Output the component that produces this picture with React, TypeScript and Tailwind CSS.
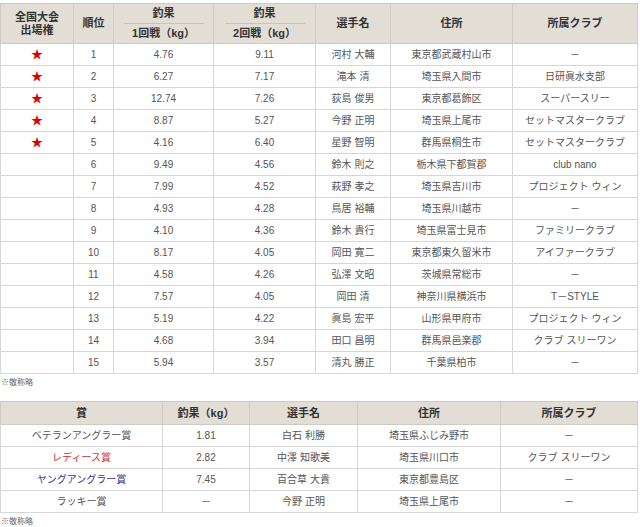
const font = "font-['Liberation_Sans','Noto_Sans_CJK_JP',sans-serif]";

type Row = [boolean, string, string, string, string, string, string];

const results: Row[] = [
  [true, "1", "4.76", "9.11", "河村 大輔", "東京都武蔵村山市", "－"],
  [true, "2", "6.27", "7.17", "滝本 清", "埼玉県入間市", "日研眞水支部"],
  [true, "3", "12.74", "7.26", "荻島 俊男", "東京都葛飾区", "スーパースリー"],
  [true, "4", "8.87", "5.27", "今野 正明", "埼玉県上尾市", "セットマスタークラブ"],
  [true, "5", "4.16", "6.40", "星野 智明", "群馬県桐生市", "セットマスタークラブ"],
  [false, "6", "9.49", "4.56", "鈴木 則之", "栃木県下都賀郡", "club nano"],
  [false, "7", "7.99", "4.52", "萩野 孝之", "埼玉県吉川市", "プロジェクト ウィン"],
  [false, "8", "4.93", "4.28", "鳥居 裕輔", "埼玉県川越市", "－"],
  [false, "9", "4.10", "4.36", "鈴木 貴行", "埼玉県富士見市", "ファミリークラブ"],
  [false, "10", "8.17", "4.05", "岡田 寛二", "東京都東久留米市", "アイファークラブ"],
  [false, "11", "4.58", "4.26", "弘澤 文昭", "茨城県常総市", "－"],
  [false, "12", "7.57", "4.05", "岡田 清", "神奈川県横浜市", "T－STYLE"],
  [false, "13", "5.19", "4.22", "眞島 宏平", "山形県甲府市", "プロジェクト ウィン"],
  [false, "14", "4.68", "3.94", "田口 昌明", "群馬県邑楽郡", "クラブ スリーワン"],
  [false, "15", "5.94", "3.57", "清丸 勝正", "千葉県柏市", "－"],
];

const awards = [
  { name: "ベテランアングラー賞", color: "text-[#3f7a3a]", kg: "1.81", player: "白石 利勝", addr: "埼玉県ふじみ野市", club: "－" },
  { name: "レディース賞", color: "text-[#d0303c]", kg: "2.82", player: "中澤 知歌美", addr: "埼玉県川口市", club: "クラブ スリーワン" },
  { name: "ヤングアングラー賞", color: "text-[#34348a]", kg: "7.45", player: "百合草 大貴", addr: "東京都豊島区", club: "－" },
  { name: "ラッキー賞", color: "text-[#8e3a98]", kg: "－", player: "今野 正明", addr: "埼玉県上尾市", club: "－" },
];

const th = "border border-[#cfcbc2] bg-[#e2ded5] text-[#333] font-bold text-[11px] leading-[13px] text-center align-middle p-0";
const td = "border border-[#d6d6d6] text-[#555] text-[10px] text-center align-middle p-0";

function KgHead({ round }: { round: string }) {
  return (
    <div className="flex flex-col items-center">
      <span className="pb-[3px]">釣果</span>
      <div className="w-[80px] border-t border-[#c8c4bb]" />
      <span className="pt-[3px]">{round}回戦（kg）</span>
    </div>
  );
}

export default function App() {
  return (
    <div className={`${font} bg-white w-[640px] h-[527px] pt-[3px] overflow-hidden`}>
      <table className="table-fixed border-collapse w-[637px]">
        <colgroup>
          <col className="w-[73px]" />
          <col className="w-[40px]" />
          <col className="w-[100px]" />
          <col className="w-[102px]" />
          <col className="w-[75px]" />
          <col className="w-[122px]" />
          <col className="w-[125px]" />
        </colgroup>
        <thead>
          <tr className="h-[40px]">
            <th className={th}>全国大会<br />出場権</th>
            <th className={th}>順位</th>
            <th className={th}><KgHead round="1" /></th>
            <th className={th}><KgHead round="2" /></th>
            <th className={th}>選手名</th>
            <th className={th}>住所</th>
            <th className={th}>所属クラブ</th>
          </tr>
        </thead>
        <tbody>
          {results.map((r) => (
            <tr key={r[1]} className="h-[22px]">
              <td className={td}>{r[0] && <span className="text-[#e00000] text-[12px]">★</span>}</td>
              <td className={td}>{r[1]}</td>
              <td className={td}>{r[2]}</td>
              <td className={td}>{r[3]}</td>
              <td className={td}>{r[4]}</td>
              <td className={td}>{r[5]}</td>
              <td className={td}>{r[6]}</td>
            </tr>
          ))}
        </tbody>
      </table>
      <p className="text-[8px] text-[#666] leading-[10px] pt-[4px] pl-[1px]">※敬称略</p>

      <table className="table-fixed border-collapse w-[637px] mt-[13px]">
        <colgroup>
          <col className="w-[162px]" />
          <col className="w-[87px]" />
          <col className="w-[108px]" />
          <col className="w-[143px]" />
          <col className="w-[137px]" />
        </colgroup>
        <thead>
          <tr className="h-[23px]">
            <th className={th}>賞</th>
            <th className={th}>釣果（kg）</th>
            <th className={th}>選手名</th>
            <th className={th}>住所</th>
            <th className={th}>所属クラブ</th>
          </tr>
        </thead>
        <tbody>
          {awards.map((a) => (
            <tr key={a.name} className="h-[22px]">
              <td className={`${td} ${a.color}`}>{a.name}</td>
              <td className={td}>{a.kg}</td>
              <td className={td}>{a.player}</td>
              <td className={td}>{a.addr}</td>
              <td className={td}>{a.club}</td>
            </tr>
          ))}
        </tbody>
      </table>
      <p className="text-[8px] text-[#666] leading-[10px] pt-[4px] pl-[1px]">※敬称略</p>
    </div>
  );
}
